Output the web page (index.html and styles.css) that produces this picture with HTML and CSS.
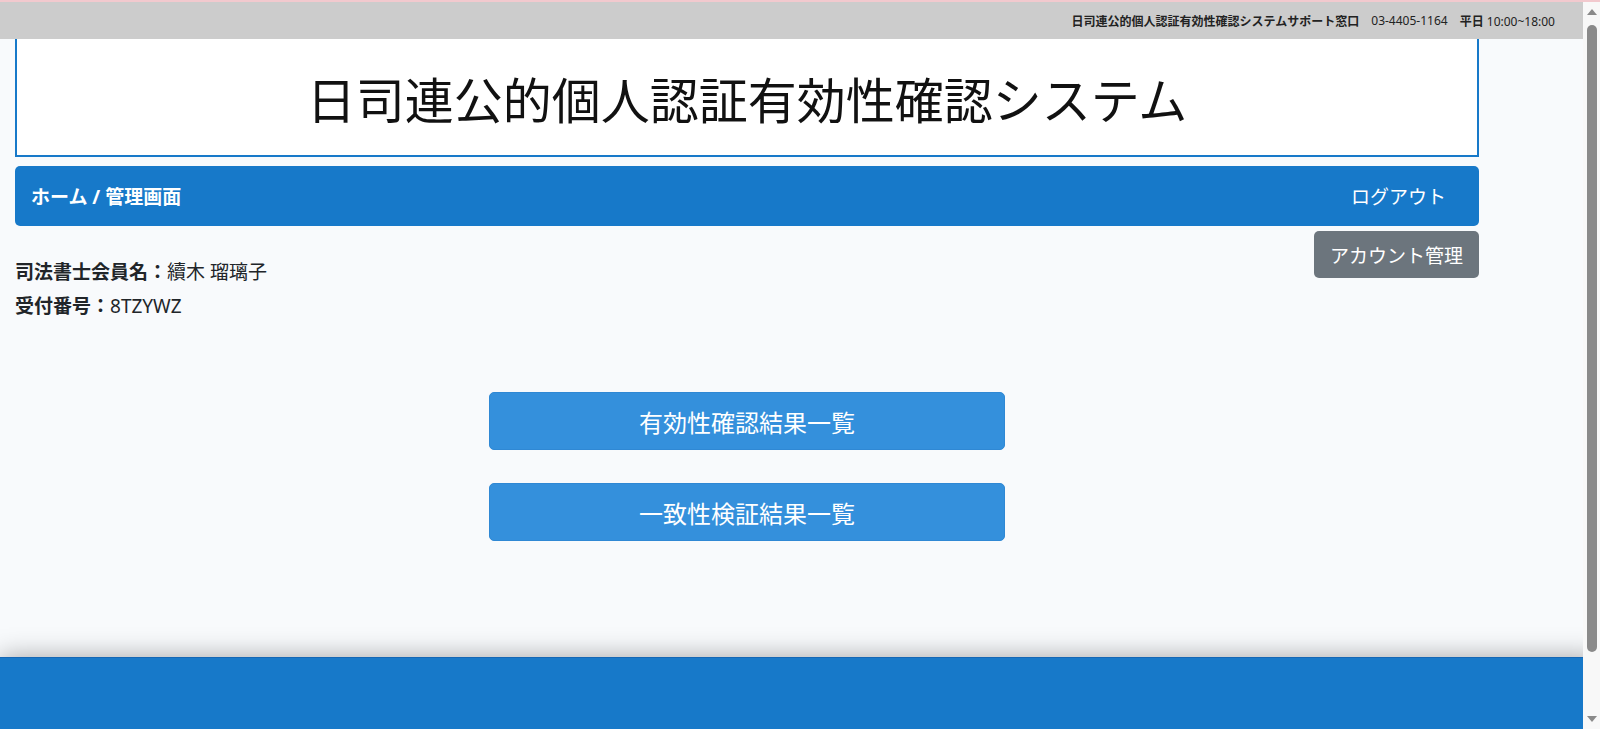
FILE: index.html
```html
<!DOCTYPE html>
<html lang="ja">

<head>
    <meta charset="UTF-8">
    <meta name="viewport" content="width=device-width, initial-scale=1.0">
    <title>日司連公的個人認証有効性確認システム</title>
    <link rel="stylesheet" href="styles.css">
</head>

<body>
    <div class="topbar">
        <b>日司連公的個人認証有効性確認システムサポート窓口</b>
        <span>03-4405-1164</span>
        <span><b>平日</b> 10:00~18:00</span>
    </div>

    <div class="wrap">
        <header class="site-header">
            <h1>日司連公的個人認証有効性確認システム</h1>
        </header>

        <nav class="navbar">
            <span class="crumb">ホーム / 管理画面</span>
            <a class="logout" href="#">ログアウト</a>
        </nav>

        <div class="user-row">
            <div class="user-info">
                <p><b>司法書士会員名：</b>續木 瑠璃子</p>
                <p><b>受付番号：</b>8TZYWZ</p>
            </div>
            <button class="btn-gray">アカウント管理</button>
        </div>

        <div class="menu">
            <button class="btn-main">有効性確認結果一覧</button>
            <button class="btn-main">一致性検証結果一覧</button>
        </div>
    </div>

    <footer class="footer"></footer>

    <!-- スクロールバー -->
    <div class="scrollbar" aria-hidden="true">
        <span class="arrow-up"></span>
        <span class="thumb"></span>
        <span class="arrow-down"></span>
    </div>
</body>

</html>
```

FILE: styles.css
```css
body {
    margin: 0;
    background-color: #f8fafc;
    font-family: "Noto Sans", "Noto Sans CJK JP", sans-serif;
    color: #212529;
}

/* 上部のサポート窓口バー */
.topbar {
    height: 37px;
    border-top: 2px solid #f2c9ce;
    background-color: #cccccc;
    display: flex;
    justify-content: flex-end;
    align-items: center;
    gap: 12px;
    padding-right: 45px;
    font-size: 12px;
    color: #222;
}

.wrap {
    width: 1464px;
    margin-left: 15px;
}

.site-header {
    height: 116px;
    background: white;
    border: 2px solid #1779c9;
    border-top: none;
    display: flex;
    justify-content: center;
    align-items: center;
}

.site-header h1 {
    margin: 0;
    font-size: 49px;
    font-weight: normal;
    color: #111;
}

.navbar {
    margin-top: 9px;
    height: 60px;
    padding: 0 16px;
    background-color: #1779c9;
    border-radius: 5px;
    display: flex;
    justify-content: space-between;
    align-items: center;
    color: white;
    font-size: 19px;
}

.crumb {
    font-weight: bold;
}

.logout {
    color: white;
    text-decoration: none;
    padding: 0 17px;
}

.user-row {
    margin-top: 5px;
    display: flex;
    justify-content: space-between;
    align-items: flex-start;
}

.user-info {
    padding-top: 24px;
    font-size: 19px;
}

.user-info p {
    margin: 0;
    line-height: 34px;
}

.btn-gray {
    height: 47px;
    padding: 0 16px;
    background-color: #6c757d;
    color: white;
    border: none;
    border-radius: 5px;
    font-family: inherit;
    font-size: 19px;
}

.menu {
    margin-top: 69px;
    display: flex;
    flex-direction: column;
    align-items: center;
    gap: 33px;
}

.btn-main {
    width: 516px;
    height: 58px;
    background-color: #3490dc;
    color: white;
    border: 1px solid #2f88d4;
    border-radius: 5px;
    font-family: inherit;
    font-size: 24px;
}

.footer {
    margin-top: 116px;
    height: 150px;
    background-color: #1779c9;
    border-top: 1px solid #1567b5;
    box-shadow: 0 0 25px rgba(0, 0, 0, 0.35);
}

/* ブラウザのスクロールバー */
.scrollbar {
    position: fixed;
    top: 2px;
    right: 0;
    bottom: 0;
    width: 17px;
    background-color: #f8f8f8;
    display: flex;
    flex-direction: column;
    align-items: center;
}

.arrow-up {
    margin-top: 7px;
    border-left: 5px solid transparent;
    border-right: 5px solid transparent;
    border-bottom: 6px solid #8a8a8a;
}

.thumb {
    margin-top: 10px;
    width: 10px;
    height: 627px;
    border-radius: 5px;
    background-color: #8a8a8a;
}

.arrow-down {
    margin-top: auto;
    margin-bottom: 7px;
    border-left: 5px solid transparent;
    border-right: 5px solid transparent;
    border-top: 6px solid #8a8a8a;
}
```
